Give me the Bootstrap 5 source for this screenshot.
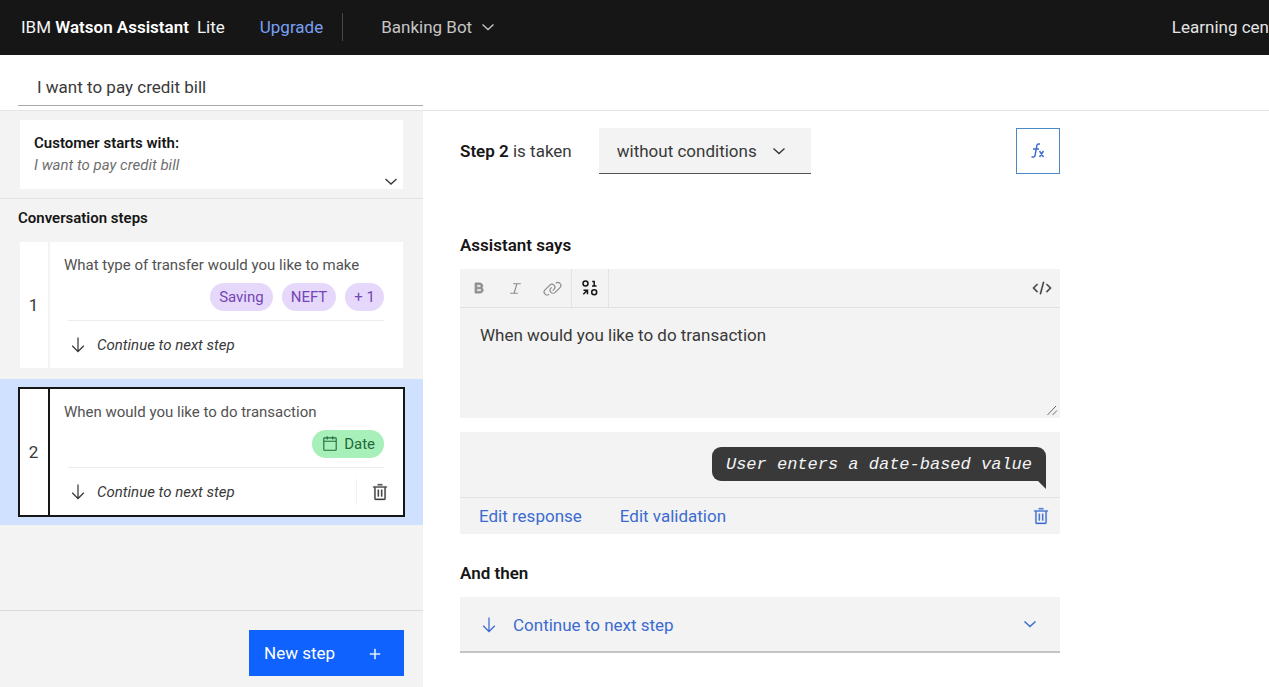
<!DOCTYPE html>
<html lang="en">
<head>
<meta charset="utf-8">
<meta name="viewport" content="width=device-width, initial-scale=1">
<title>IBM Watson Assistant – Banking Bot</title>
<link href="https://cdn.jsdelivr.net/npm/bootstrap@5.3.0/dist/css/bootstrap.min.css" rel="stylesheet">
<style>
  :root {
    --ui-ink: #161616;
    --ui-text: #393939;
    --ui-layer: #f3f3f3;
    --ui-line: #e3e3e3;
    --ui-link: #3b6bd0;
    --ui-primary: #0f62fe;
  }
  body {
    font-family: Roboto, "Noto Sans", sans-serif;
    font-size: 17px;
    line-height: 24px;
    color: var(--ui-text);
    overflow-x: hidden;
  }
  svg { fill: currentColor; flex: none; }
  button, input, select, textarea { border-radius: 0 !important; }
  a { color: var(--ui-link); text-decoration: none; }
  h2, .fw-strong { font-size: 17px; line-height: 24px; font-weight: 600; color: var(--ui-ink); margin: 0; }
  .plain { border: 0; background: none; padding: 0; color: inherit; display: inline-flex; align-items: center; justify-content: center; }

  .topbar { background: var(--ui-ink); color: #f4f4f4; height: 55px; padding: 0 0 2px 21px; white-space: nowrap; }
  .topbar b { font-weight: 600; color: #fff; }
  .topbar a.upgrade { color: #78a0f5; margin-left: 35px; }
  .topbar .rule { width: 1px; height: 28px; background: #484848; margin: 0 38px 0 19px; }
  .topbar .bot { color: #c6c6c6; gap: 6px; }
  .topbar .learn { color: #e4e4e4; }

  .titlebar { height: 56px; padding-left: 18px; border-bottom: 1px solid var(--ui-line); }
  .titlebar input { width: calc(33.333vw - 18px); height: 51px; padding: 14px 19px 0; border: 0; border-bottom: 1px solid #a8a8a8; background: none; color: var(--ui-text); }

  .sidebar { background: var(--ui-layer); font-size: 15px; line-height: 22px; }
  .starts { margin: 9px 20px; padding: 12px 14px 13px; background: #fff; }
  .starts em { color: #6f6f6f; }
  .starts button { right: 4px; bottom: 0; }
  .sidebar h2 { font-size: 15px; line-height: 22px; padding: 8px 18px 3px; border-top: 1px solid var(--ui-line); }
  .starts .fw-strong { font-size: 15px; line-height: 22px; }
  .step-item { padding: 10px 20px; }
  .step-box { background: #fff; min-height: 126px; }
  .step-no { width: 30px; border-right: 2px solid var(--ui-layer); font-size: 17px; padding-right: 1px; }
  .step-body { padding: 12px 19px 0 14px; }
  .step-text { color: #525252; }
  .step-next { margin-left: 4px; border-top: 1px solid #ececec; height: 48px; color: var(--ui-text); }
  .step-next em { margin-left: 9px; }
  .step-item.current { background: #d0e1ff; margin-top: 1px; }
  .current .step-box { outline: 2px solid var(--ui-ink); }
  .current .step-no { border-color: var(--ui-ink); }
  .current .step-bin { width: 32px; height: 26px; border-left: 1px solid #f0f0f0; margin-right: -4px; padding-left: 14px; }
  .pills { gap: 9px; margin-top: 7px; }
  .pill { border-radius: 14px; height: 28px; padding: 0 9px; background: #e6d8fb; color: #7545b5; }
  .pill-date { background: #a7f0ba; color: #24683a; gap: 5px; }
  .side-foot { border-top: 1px solid #dcdcdc; padding: 19px 19px 11px; }
  .btn-new { width: 155px; height: 46px; background: var(--ui-primary); color: #fff; padding: 2px 20px 0 15px; font-size: 17px; border: 0; }
  .btn-new:hover { background: #0353e9; color: #fff; }

  .editor { padding: 17px 37px 34px; }
  .editor-inner { max-width: 600px; }
  .cond-row { gap: 27px; }
  .cond { width: 212px; height: 46px; padding: 2px 18px 0; font-size: 17px; border: 0; border-bottom: 1px solid #525252; background-color: var(--ui-layer); color: var(--ui-text); background-size: 20px 20px; background-position: right 22px center;
    background-image: url("data:image/svg+xml,%3Csvg xmlns='http://www.w3.org/2000/svg' viewBox='0 0 20 20'%3E%3Cpath fill='none' stroke='%23333' stroke-width='1.3' d='M4.5 7.5l5.5 5 5.5-5'/%3E%3C/svg%3E"); }
  .btn-fx { width: 44px; height: 46px; border: 1px solid #4a88c8; color: #3b6bd0; background: #fff; }
  .says { margin-top: 59px; }
  .compose { background: var(--ui-layer); margin-top: 12px; }
  .tools { height: 39px; border-bottom: 1px solid var(--ui-line); color: #8d8d8d; }
  .tools .plain { width: 37px; }
  .tools .var-btn { width: 38px; border: solid var(--ui-line); border-width: 0 1px; color: var(--ui-ink); }
  .tools .code-btn { color: var(--ui-text); }
  .compose textarea { display: block; width: 100%; height: 110px; border: 0; background: none; padding: 15px 20px; resize: vertical; color: var(--ui-text); }
  .compose textarea::-webkit-resizer {
    background: url("data:image/svg+xml,%3Csvg xmlns='http://www.w3.org/2000/svg' viewBox='0 0 15 15'%3E%3Cpath fill='none' stroke='%23666' d='M2.500 12L11 3M7.500 12L12 7.500'/%3E%3C/svg%3E") center / 15px 15px no-repeat; }
  .answer { background: var(--ui-layer); margin-top: 14px; }
  .answer-top { height: 66px; border-bottom: 1px solid var(--ui-line); padding: 15px 14px 0; }
  .bubble { background: #393939; color: #f4f4f4; border-radius: 9px 9px 0 9px; height: 34px; padding: 6px 14px; font: italic 17px/24px "Liberation Mono", monospace; }
  .bubble::after { content: ""; position: absolute; right: 0; top: 100%; border-left: 8px solid transparent; border-top: 8px solid #393939; }
  .answer-foot { height: 36px; padding: 0 10px 0 19px; color: var(--ui-link); gap: 38px; }
  .then { margin-top: 27px; }
  .then-box { margin-top: 12px; }
  .then-box svg { left: 19px; top: 18px; color: var(--ui-link); pointer-events: none; }
  .then-box select { height: 56px; padding: 3px 53px 0; font-size: 17px; border: 0; border-bottom: 2px solid #c4c4c4; background-color: var(--ui-layer); color: var(--ui-link); background-size: 20px 20px; background-position: right 20px center;
    background-image: url("data:image/svg+xml,%3Csvg xmlns='http://www.w3.org/2000/svg' viewBox='0 0 20 20'%3E%3Cpath fill='none' stroke='%233b6bd0' stroke-width='1.5' d='M4.5 7.5l5.5 5 5.5-5'/%3E%3C/svg%3E"); }
</style>
</head>
<body class="min-vh-100 d-flex flex-column">

<svg class="d-none" aria-hidden="true">
  <symbol id="i-down" viewBox="0 0 32 32"><path d="M24.59 16.59 17 24.17V4h-2v20.17l-7.59-7.58L6 18l10 10 10-10z"/></symbol>
  <symbol id="i-bin" viewBox="0 0 32 32"><path stroke="currentColor" stroke-width=".6" d="M12 12h2v12h-2zM18 12h2v12h-2zM4 6v2h2v20a2 2 0 0 0 2 2h16a2 2 0 0 0 2-2V8h2V6zm4 22V8h16v20zM12 2h8v2h-8z"/></symbol>
  <symbol id="i-chev" viewBox="0 0 20 20"><path fill="none" stroke="currentColor" stroke-width="1.3" d="M4.5 7.5l5.5 5 5.5-5"/></symbol>
</svg>

<header class="topbar d-flex align-items-center">
  <span>IBM <b>Watson Assistant</b></span>
  <span class="ms-2">Lite</span>
  <a class="upgrade" href="#">Upgrade</a>
  <span class="rule"></span>
  <button class="plain bot" type="button">Banking Bot
    <svg width="20" height="20"><use href="#i-chev"/></svg></button>
  <a class="learn ms-auto" href="#">Learning cen</a>
</header>

<div class="titlebar">
  <input type="text" aria-label="Action name" value="I want to pay credit bill">
</div>

<div class="row g-0 flex-grow-1">
  <aside class="col-4 sidebar d-flex flex-column">
    <section class="starts position-relative">
      <div class="fw-strong">Customer starts with:</div>
      <em class="d-block">I want to pay credit bill</em>
      <button class="plain position-absolute" type="button" aria-label="Show phrases"><svg width="16" height="16" viewBox="0 0 16 16"><path fill="none" stroke="currentColor" stroke-width="1.4" d="M2.500 6l5.500 5 5.500-5"/></svg></button>
    </section>
    <h2>Conversation steps</h2>
    <ol class="list-unstyled mb-0">
      <li class="step-item">
        <div class="step-box d-flex">
          <div class="step-no d-flex align-items-center justify-content-center">1</div>
          <div class="step-body flex-grow-1 d-flex flex-column">
            <div class="step-text">What type of transfer would you like to make</div>
            <div class="d-flex justify-content-end pills">
              <span class="pill d-flex align-items-center">Saving</span>
              <span class="pill d-flex align-items-center">NEFT</span>
              <span class="pill d-flex align-items-center">+ 1</span>
            </div>
            <div class="step-next d-flex align-items-center mt-auto">
              <svg width="20" height="20"><use href="#i-down"/></svg><em>Continue to next step</em>
            </div>
          </div>
        </div>
      </li>
      <li class="step-item current">
        <div class="step-box d-flex">
          <div class="step-no d-flex align-items-center justify-content-center">2</div>
          <div class="step-body flex-grow-1 d-flex flex-column">
            <div class="step-text">When would you like to do transaction</div>
            <div class="d-flex justify-content-end pills">
              <span class="pill pill-date d-flex align-items-center">
                <svg width="18" height="18" viewBox="0 0 32 32"><path d="M26 4h-4V2h-2v2h-8V2h-2v2H6a2 2 0 0 0-2 2v20a2 2 0 0 0 2 2h20a2 2 0 0 0 2-2V6a2 2 0 0 0-2-2zm0 22H6V12h20zm0-16H6V6h4v2h2V6h8v2h2V6h4z"/></svg>Date</span>
            </div>
            <div class="step-next d-flex align-items-center mt-auto">
              <svg width="20" height="20"><use href="#i-down"/></svg><em>Continue to next step</em>
              <button class="plain step-bin ms-auto" type="button" aria-label="Delete step"><svg width="18" height="18"><use href="#i-bin"/></svg></button>
            </div>
          </div>
        </div>
      </li>
    </ol>
    <div class="side-foot mt-auto d-flex justify-content-end">
      <button class="btn btn-new d-flex align-items-center justify-content-between" type="button">New step
        <svg width="18" height="18" viewBox="0 0 32 32"><path stroke="currentColor" stroke-width=".6" d="M17 15V7h-2v8H7v2h8v8h2v-8h8v-2z"/></svg></button>
    </div>
  </aside>

  <main class="col-8 editor">
    <div class="editor-inner">
      <div class="d-flex align-items-center cond-row">
        <label for="cond"><span class="fw-strong">Step 2</span> is taken</label>
        <select id="cond" class="form-select cond"><option>without conditions</option><option>with conditions</option></select>
        <button class="plain btn-fx ms-auto" type="button" aria-label="Set variable values">
          <svg width="18" height="18" viewBox="0 0 18 18"><path fill="none" stroke="currentColor" stroke-width="1.4" d="M11 2H9.500Q8.200 2 7.900 3.500L6 13.500Q5.700 15 4.400 15H2.500M4 7h6M10.500 9l4 6M14.500 9l-4 6"/></svg></button>
      </div>

      <h2 class="says"><label for="says">Assistant says</label></h2>
      <div class="compose">
        <div class="tools d-flex">
          <button class="plain" type="button" aria-label="Bold"><svg width="18" height="18" viewBox="0 0 32 32"><path stroke="currentColor" stroke-width="1.400" d="M18.250 25H9V7h8.500a5.250 5.250 0 0 1 4 8.650A5.250 5.250 0 0 1 18.250 25zM12 22h6.230a2.250 2.250 0 1 0 0-4.500H12zm0-7.500h5.500a2.250 2.250 0 1 0 0-4.500H12z"/></svg></button>
          <button class="plain" type="button" aria-label="Italic"><svg width="19" height="19" viewBox="0 0 32 32"><path d="M25 9V7H12v2h5.140l-4.370 14H7v2h13v-2h-5.140l4.370-14z"/></svg></button>
          <button class="plain" type="button" aria-label="Link"><svg width="19" height="19" viewBox="0 0 32 32"><path d="M29.250 6.760a6 6 0 0 0-8.500 0l1.420 1.420a4 4 0 1 1 5.670 5.670l-8 8a4 4 0 1 1-5.670-5.660l1.410-1.420-1.410-1.420-1.420 1.420a6 6 0 0 0 0 8.500A6 6 0 0 0 17 25a6 6 0 0 0 4.270-1.760l8-8a6 6 0 0 0-.02-8.480z"/><path d="M4.190 24.820a4 4 0 0 1 0-5.670l8-8a4 4 0 0 1 5.670 0A3.940 3.940 0 0 1 19 14a4 4 0 0 1-1.170 2.850L15.710 19l1.420 1.420 2.120-2.120a6 6 0 0 0-8.510-8.510l-8 8a6 6 0 0 0 0 8.510A6 6 0 0 0 7 28a6.070 6.070 0 0 0 4.280-1.760l-1.420-1.420a4 4 0 0 1-5.670 0z"/></svg></button>
          <button class="plain var-btn" type="button" aria-label="Insert variable"><svg width="18" height="18" viewBox="0 0 18 18"><g fill="none" stroke="currentColor" stroke-width="1.500"><circle cx="4.500" cy="4.500" r="2.500"/><circle cx="13.200" cy="13.200" r="2.500"/><path d="M11.200 2.500h2v4.500M11 7h4.500M2.300 15.300l3.700-3.700M2.500 11.300h4v4"/></g></svg></button>
          <button class="plain code-btn ms-auto" type="button" aria-label="JSON editor"><svg width="20" height="20" viewBox="0 0 32 32"><path stroke="currentColor" stroke-width=".5" d="m31 16-7 7-1.410-1.410L28.170 16l-5.580-5.590L24 9zM1 16l7-7 1.410 1.410L3.830 16l5.580 5.590L8 23zM12.420 25.484 17.640 6l1.932.517L14.352 26z"/></svg></button>
        </div>
        <textarea id="says">When would you like to do transaction</textarea>
      </div>

      <section class="answer">
        <div class="answer-top d-flex justify-content-end">
          <div class="bubble position-relative">User enters a date-based value</div>
        </div>
        <div class="answer-foot d-flex align-items-center">
          <a href="#">Edit response</a>
          <a href="#">Edit validation</a>
          <button class="plain ms-auto" type="button" aria-label="Delete response"><svg width="18" height="18"><use href="#i-bin"/></svg></button>
        </div>
      </section>

      <h2 class="then"><label for="then">And then</label></h2>
      <div class="then-box position-relative">
        <select id="then" class="form-select"><option>Continue to next step</option><option>End the action</option></select>
        <svg class="position-absolute" width="20" height="20"><use href="#i-down"/></svg>
      </div>
    </div>
  </main>
</div>

<script src="https://cdn.jsdelivr.net/npm/bootstrap@5.3.0/dist/js/bootstrap.bundle.min.js"></script>
</body>
</html>
